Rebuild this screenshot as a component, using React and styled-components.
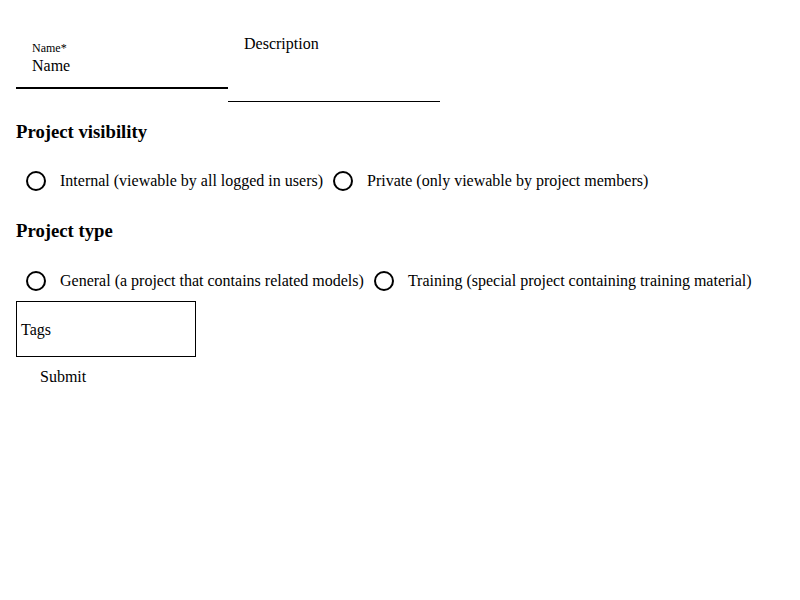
import styled, { createGlobalStyle } from 'styled-components';

const GlobalStyle = createGlobalStyle`
  body {
    margin: 0;
    font-family: "Liberation Serif", "Times New Roman", serif;
    font-size: 16px;
    color: #000;
    background: #fff;
  }
`;

const visibilityOptions = [
  { id: 'internal', label: 'Internal (viewable by all logged in users)' },
  { id: 'private', label: 'Private (only viewable by project members)' },
];

const typeOptions = [
  { id: 'general', label: 'General (a project that contains related models)' },
  { id: 'training', label: 'Training (special project containing training material)' },
];

const RadioGroup = ({ name, options }) => (
  <StyledRadioRow>
    {options.map(opt => (
      <StyledRadioItem key={opt.id}>
        <input type="radio" name={name} value={opt.id} />
        <StyledCircle />
        <StyledRadioText>{opt.label}</StyledRadioText>
      </StyledRadioItem>
    ))}
  </StyledRadioRow>
);

const App = () => {
  return (
    <>
      <GlobalStyle />
      <StyledForm onSubmit={e => e.preventDefault()}>
        <StyledFieldsRow>
          <StyledNameField>
            <StyledSmallLabel>Name*</StyledSmallLabel>
            <StyledValue>Name</StyledValue>
          </StyledNameField>
          <StyledDescriptionField>
            <StyledValue>Description</StyledValue>
          </StyledDescriptionField>
        </StyledFieldsRow>

        <StyledHeading>Project visibility</StyledHeading>
        <RadioGroup name="visibility" options={visibilityOptions} />

        <StyledHeading>Project type</StyledHeading>
        <RadioGroup name="type" options={typeOptions} />

        <StyledTags>Tags</StyledTags>
        <StyledSubmit type="submit">Submit</StyledSubmit>
      </StyledForm>
    </>
  );
};

export default App;

const StyledForm = styled.form`
  display: flex;
  flex-direction: column;
  align-items: flex-start;
  padding: 16px 16px 0;
`;

const StyledFieldsRow = styled.div`
  display: flex;
  align-items: flex-start;
`;

const StyledNameField = styled.div`
  box-sizing: border-box;
  width: 212px;
  height: 73px;
  padding: 24px 16px 0;
  border-bottom: 2px solid #000;
  display: flex;
  flex-direction: column;
`;

const StyledDescriptionField = styled.div`
  box-sizing: border-box;
  width: 212px;
  height: 86px;
  padding: 19px 16px 0;
  border-bottom: 1px solid #000;
`;

const StyledSmallLabel = styled.span`
  font-size: 12px;
  line-height: 17px;
`;

const StyledValue = styled.span`
  font-size: 16px;
  line-height: 18px;
`;

const StyledHeading = styled.h3`
  font-size: 18.72px;
  font-weight: bold;
  margin: 18.72px 0;
`;

const StyledRadioRow = styled.div`
  display: flex;
  align-items: center;
  height: 40px;
`;

const StyledRadioItem = styled.label`
  display: flex;
  align-items: center;
  padding-left: 10px;
  cursor: pointer;
  white-space: nowrap;

  input {
    display: none;
  }
`;

const StyledCircle = styled.span`
  box-sizing: border-box;
  width: 20px;
  height: 20px;
  border: 2px solid #000;
  border-radius: 50%;
`;

const StyledRadioText = styled.span`
  margin-left: 14px;
`;

const StyledTags = styled.div`
  box-sizing: border-box;
  width: 180px;
  height: 56px;
  border: 1px solid #000;
  padding: 2px 0 0 4px;
  display: flex;
  align-items: center;
`;

const StyledSubmit = styled.button`
  all: unset;
  cursor: pointer;
  font-family: "Liberation Serif", "Times New Roman", serif;
  font-size: 16px;
  line-height: 18px;
  padding: 11px 24px 9px;
`;
